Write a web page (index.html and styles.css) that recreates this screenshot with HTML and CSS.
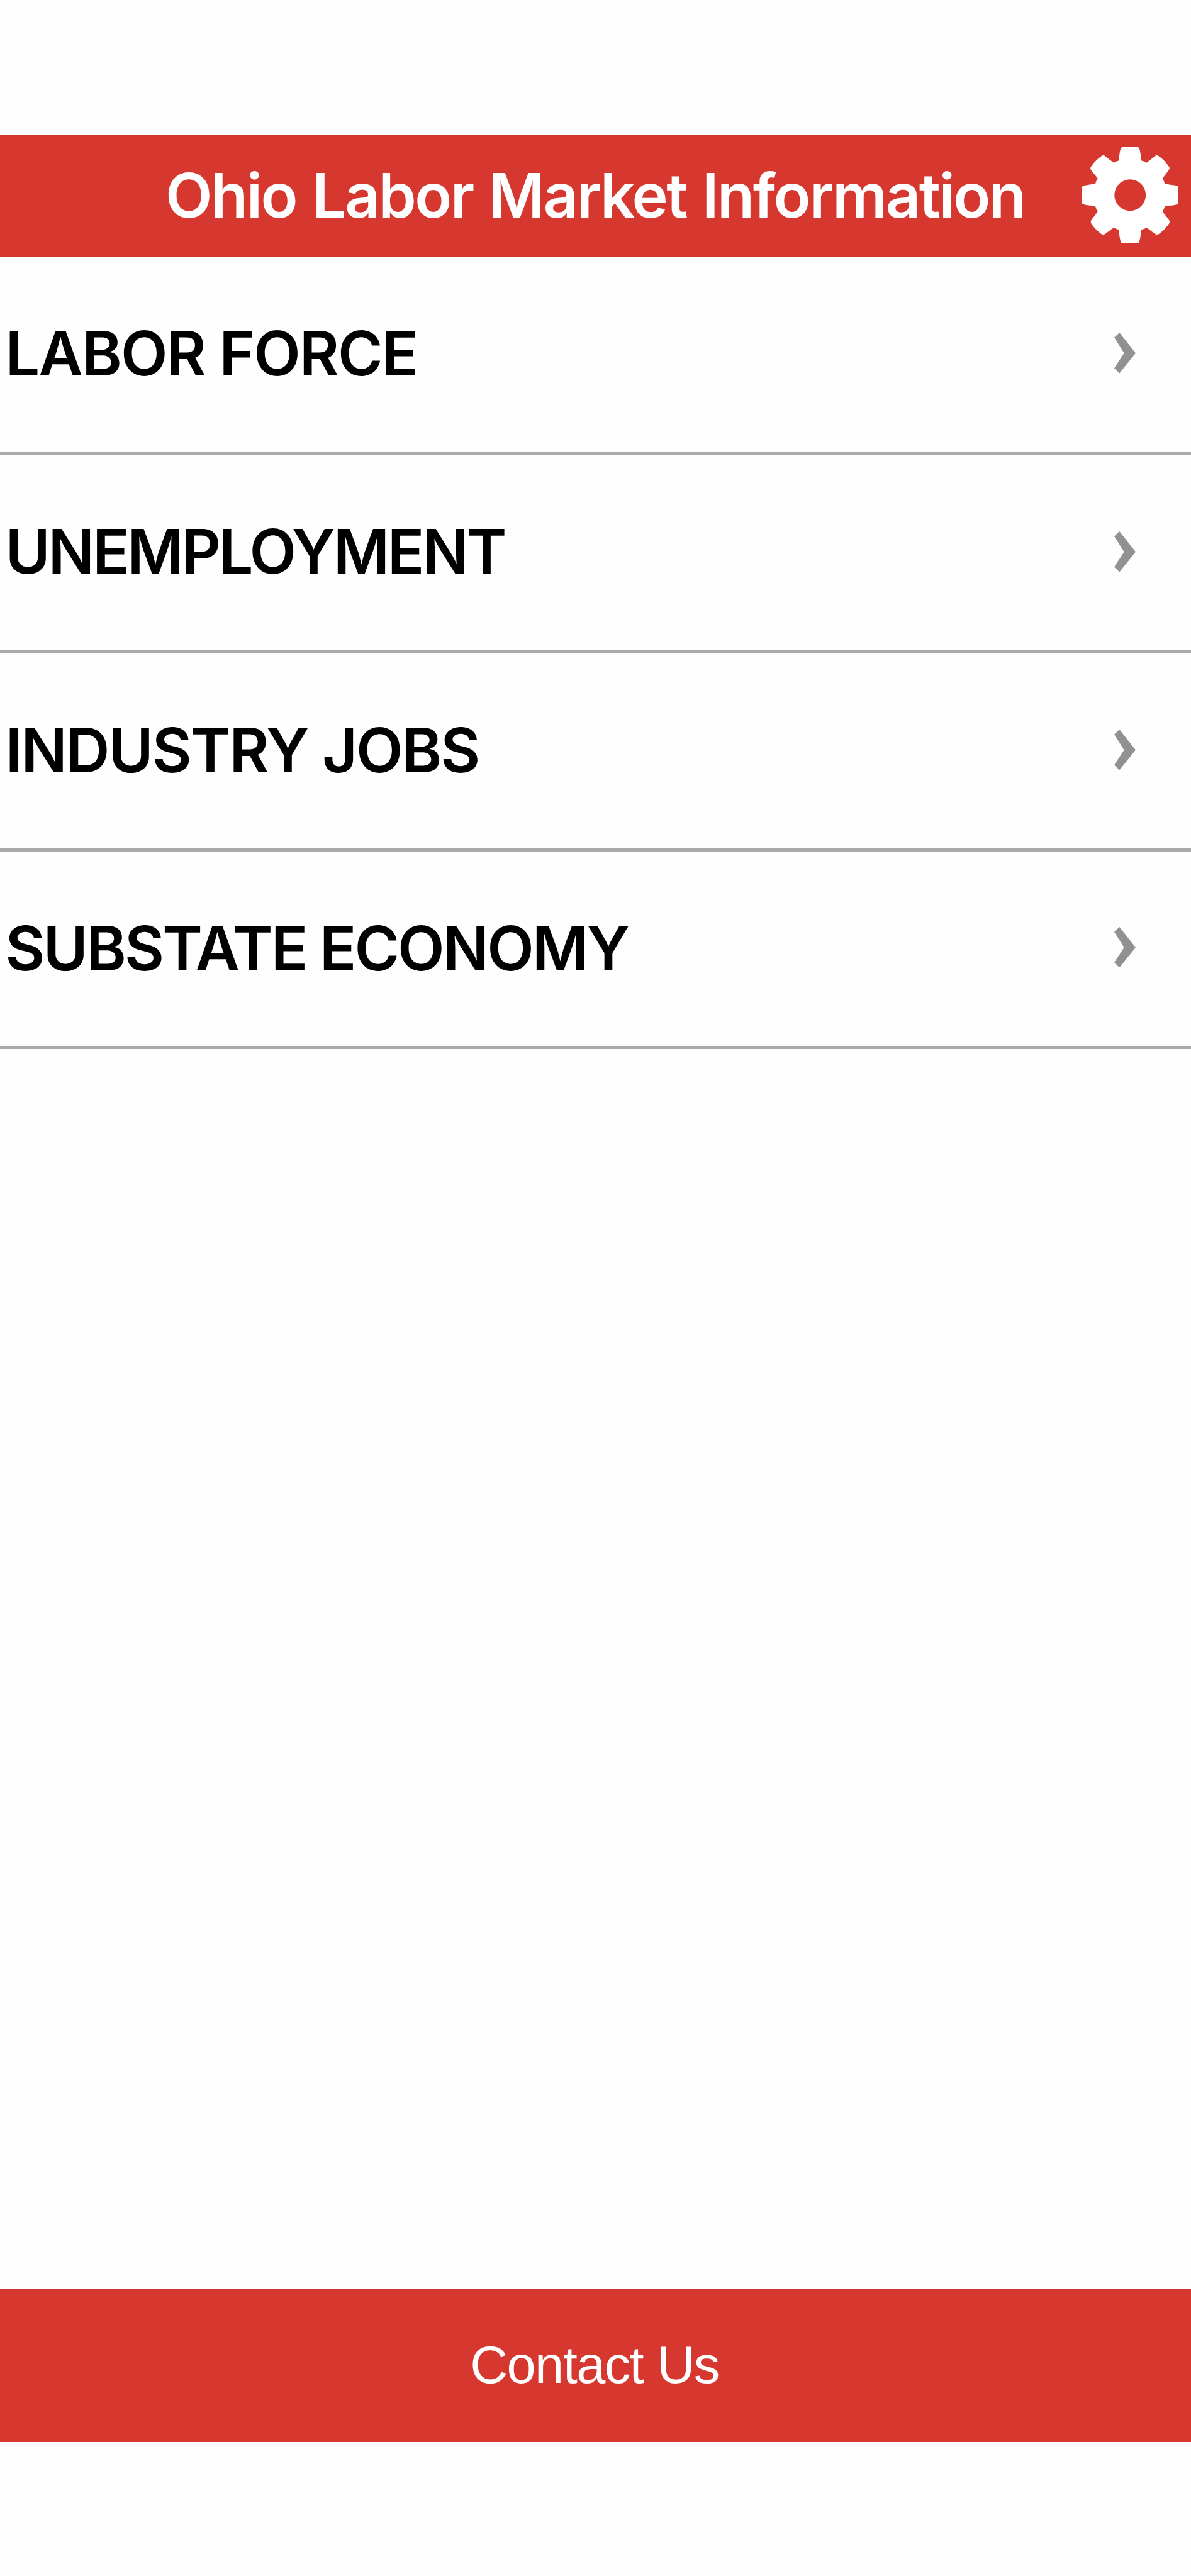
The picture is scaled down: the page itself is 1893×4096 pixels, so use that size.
FILE: index.html
```html
<!DOCTYPE html>
<html lang="en">
<head>
<meta charset="utf-8">
<title>Ohio Labor Market Information</title>
<link rel="stylesheet" href="styles.css">
</head>
<body>
<div class="app">
  <header class="topbar">
    <h1 class="title">Ohio Labor Market Information</h1>
    <svg class="gear" viewBox="100 110 580 580" aria-label="Settings"><path fill-rule="evenodd" d="M324 196Q327 150 334 128Q336 117 347 117H434Q443 117 445 128Q452 150 456 196Q473 201 488 209L536 171Q547 161 560 171Q595 195 619 232Q626 242 618 253L582 301Q590 316 595 335Q640 339 660 344Q674 347 674 358V443Q673 454 660 457Q640 462 595 466Q590 483 582 498L619 547Q627 558 619 569Q596 604 560 629Q548 638 536 628L488 592Q473 600 456 604Q452 650 445 672Q443 683 434 683H347Q336 683 334 672Q327 650 324 604Q308 600 293 592L244 628Q232 638 220 629Q185 604 162 569Q155 558 162 547L199 498Q190 483 185 465Q140 461 120 456Q106 453 106 441V358Q107 346 120 344Q140 338 185 334Q190 316 199 301L160 253Q153 242 160 232Q185 195 220 171Q232 161 244 171L293 209Q308 201 324 196ZM390 307.500a92.500 92.500 0 1 0 0 185a92.500 92.500 0 1 0 0-185Z"/></svg>
  </header>
  <nav class="menu">
    <a class="row"><span class="label labor">LABOR FORCE</span><svg class="chevron" viewBox="147 102 126 239"><path d="M178 102L273 222L178 341L147 311L205 222L147 131Z"/></svg></a>
    <a class="row"><span class="label unemployment">UNEMPLOYMENT</span><svg class="chevron" viewBox="147 102 126 239"><path d="M178 102L273 222L178 341L147 311L205 222L147 131Z"/></svg></a>
    <a class="row"><span class="label industry">INDUSTRY JOBS</span><svg class="chevron" viewBox="147 102 126 239"><path d="M178 102L273 222L178 341L147 311L205 222L147 131Z"/></svg></a>
    <a class="row last"><span class="label substate">SUBSTATE ECONOMY</span><svg class="chevron" viewBox="147 102 126 239"><path d="M178 102L273 222L178 341L147 311L205 222L147 131Z"/></svg></a>
  </nav>
  <footer class="contact"><span class="contact-label">Contact Us</span></footer>
</div>
</body>
</html>
```
FILE: styles.css
```css
* { box-sizing: border-box; }
body { margin: 0; background: #fff; font-family: Inter, "Liberation Sans", sans-serif; }
.app { display: flex; flex-direction: column; height: 4096px; padding: 213.500px 0; background: #fefefe; }
.topbar { display: flex; align-items: center; justify-content: space-between; flex: none; height: 194.200px; padding: 0 19px 0 263px; background: #d6372f; }
.title { margin: 0; padding-top: 1px; color: #fff; font-size: 97px; font-weight: 600; line-height: 120px; letter-spacing: -2.580px; word-spacing: 3px; white-space: nowrap; }
.gear { width: 156.400px; height: 156.400px; fill: #fff; }
.menu { display: flex; flex-direction: column; flex: none; }
.row { display: flex; align-items: center; justify-content: space-between; height: 315.450px; padding: 0 88px 3px 8.500px; border-bottom: 5px solid #a9a9a9; }
.label { padding-top: 1px; color: #000; font-size: 97px; font-weight: 600; line-height: 120px; white-space: nowrap; }
.labor { letter-spacing: -1.990px; }
.unemployment { letter-spacing: -3.320px; }
.industry { letter-spacing: -2.200px; }
.substate { letter-spacing: -3px; }
.chevron { width: 34px; height: 64.500px; fill: #919191; }
.last { height: 313.800px; }
.last .label { margin-top: 1.600px; }
.last .chevron { margin-bottom: 1.600px; }
.contact { display: flex; align-items: center; justify-content: center; flex: none; height: 242.600px; padding: 0 3px 1px 0; margin-top: auto; background: #d6372f; color: #fff; }
.contact-label { font-family: "Liberation Sans", Arial, sans-serif; font-size: 83px; line-height: 100px; letter-spacing: -1.600px; word-spacing: 1px; }
```
